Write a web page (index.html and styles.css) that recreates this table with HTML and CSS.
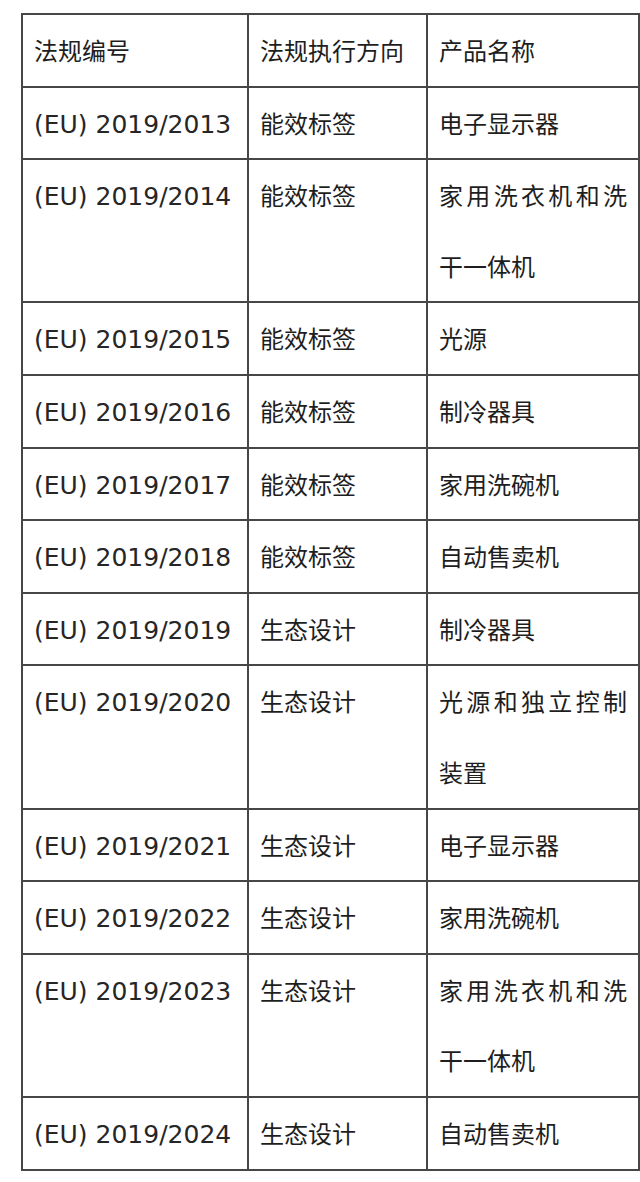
FILE: index.html
```html
<!DOCTYPE html>
<html lang="zh-CN">
<head>
<meta charset="utf-8">
<title>法规列表</title>
<link rel="stylesheet" href="styles.css">
</head>
<body>
<table class="reg-table">
  <colgroup>
    <col class="col-code">
    <col class="col-dir">
    <col class="col-name">
  </colgroup>
  <tr><td>法规编号</td><td>法规执行方向</td><td>产品名称</td></tr>
  <tr><td class="code">(EU) 2019/2013</td><td>能效标签</td><td>电子显示器</td></tr>
  <tr><td class="code">(EU) 2019/2014</td><td>能效标签</td><td class="just">家用洗衣机和洗干一体机</td></tr>
  <tr><td class="code">(EU) 2019/2015</td><td>能效标签</td><td>光源</td></tr>
  <tr><td class="code">(EU) 2019/2016</td><td>能效标签</td><td>制冷器具</td></tr>
  <tr><td class="code">(EU) 2019/2017</td><td>能效标签</td><td>家用洗碗机</td></tr>
  <tr><td class="code">(EU) 2019/2018</td><td>能效标签</td><td>自动售卖机</td></tr>
  <tr><td class="code">(EU) 2019/2019</td><td>生态设计</td><td>制冷器具</td></tr>
  <tr><td class="code">(EU) 2019/2020</td><td>生态设计</td><td class="just">光源和独立控制装置</td></tr>
  <tr><td class="code">(EU) 2019/2021</td><td>生态设计</td><td>电子显示器</td></tr>
  <tr><td class="code">(EU) 2019/2022</td><td>生态设计</td><td>家用洗碗机</td></tr>
  <tr><td class="code">(EU) 2019/2023</td><td>生态设计</td><td class="just">家用洗衣机和洗干一体机</td></tr>
  <tr><td class="code">(EU) 2019/2024</td><td>生态设计</td><td>自动售卖机</td></tr>
</table>
</body>
</html>
```

FILE: styles.css
```css
html, body {
  margin: 0;
  padding: 0;
  background: #ffffff;
}

body {
  font-family: "Noto Sans CJK SC", sans-serif;
  color: #1e1e1e;
}

.reg-table {
  border-collapse: collapse;
  margin: 13px 0 0 21px;
  width: 617px;
  table-layout: fixed;
}

.col-code { width: 226px; }
.col-dir { width: 179px; }
.col-name { width: 212px; }

.reg-table td {
  border: 2px solid #474747;
  padding: 0 11px;
  font-size: 24px;
  line-height: 70.6px;
  vertical-align: top;
  text-align: left;
  font-family: "Noto Sans CJK SC", sans-serif;
}

.reg-table td.code {
  font-family: "DejaVu Sans", "Noto Sans CJK SC", sans-serif;
  font-size: 25px;
  font-weight: 400;
  color: #262626;
  white-space: nowrap;
  line-height: 66.6px;
  padding-top: 4px;
}

.reg-table td.just {
  text-align: justify;
}
```
